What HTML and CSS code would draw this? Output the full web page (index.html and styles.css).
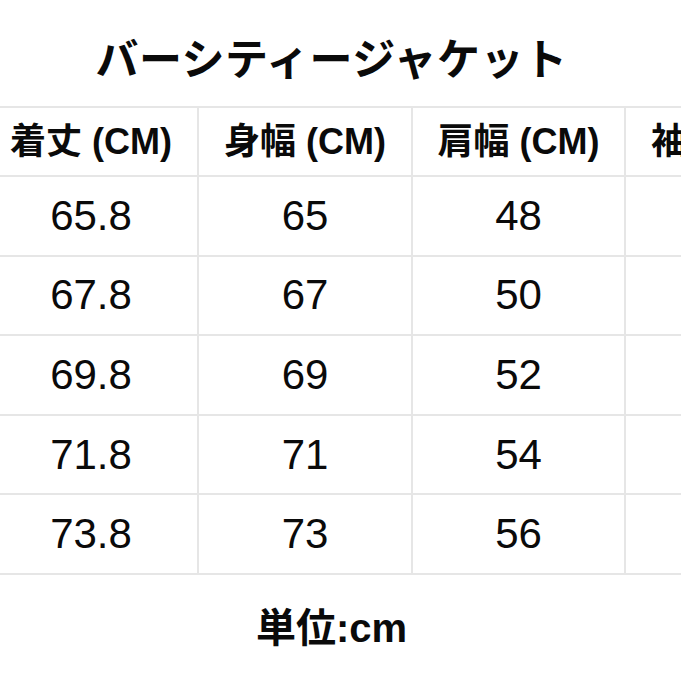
FILE: index.html
```html
<!DOCTYPE html>
<html lang="ja">
<head>
<meta charset="utf-8">
<title>バーシティージャケット サイズ表</title>
<link rel="stylesheet" href="styles.css">
</head>
<body>
<div class="page">
  <h1 class="title">バーシティージャケット</h1>
  <div class="sheet">
    <div class="cell head">着丈 (CM)</div>
    <div class="cell head">身幅 (CM)</div>
    <div class="cell head">肩幅 (CM)</div>
    <div class="cell head">袖丈 (CM)</div>

    <div class="cell">65.8</div>
    <div class="cell">65</div>
    <div class="cell">48</div>
    <div class="cell"></div>

    <div class="cell">67.8</div>
    <div class="cell">67</div>
    <div class="cell">50</div>
    <div class="cell"></div>

    <div class="cell">69.8</div>
    <div class="cell">69</div>
    <div class="cell">52</div>
    <div class="cell"></div>

    <div class="cell">71.8</div>
    <div class="cell">71</div>
    <div class="cell">54</div>
    <div class="cell"></div>

    <div class="cell">73.8</div>
    <div class="cell">73</div>
    <div class="cell">56</div>
    <div class="cell"></div>
  </div>
  <p class="unit">単位:cm</p>
</div>
</body>
</html>
```

FILE: styles.css
```css
html, body {
  margin: 0;
  padding: 0;
  background: #ffffff;
}

.page {
  width: 681px;
  height: 681px;
  overflow: hidden;
  display: flex;
  flex-direction: column;
  font-family: "Liberation Sans", "Noto Sans CJK JP", sans-serif;
  color: #0a0a0a;
}

.title {
  margin: 0;
  height: 106px;
  box-sizing: border-box;
  padding: 6px 18px 0 0;
  display: flex;
  align-items: center;
  justify-content: center;
  font-family: "Noto Sans CJK JP", sans-serif;
  font-weight: 700;
  font-size: 43px;
  line-height: 1;
  letter-spacing: 0.5px;
}

.sheet {
  display: grid;
  grid-template-columns: 212px 212px 211px 212px;
  grid-template-rows: 67px repeat(5, 77.6px);
  gap: 2px;
  padding: 2px;
  margin-left: -17px;
  width: max-content;
  background: #e6e6e6;
}

.cell {
  background: #ffffff;
  display: flex;
  align-items: center;
  justify-content: center;
  font-size: 42px;
  line-height: 1;
  white-space: nowrap;
  overflow: hidden;
}

.head {
  font-size: 36px;
  font-weight: 700;
}

.unit {
  margin: 0;
  flex: 1;
  display: flex;
  align-items: center;
  justify-content: center;
  padding: 0 18px 0 0;
  font-weight: 700;
  font-size: 40px;
  line-height: 1;
}
```
